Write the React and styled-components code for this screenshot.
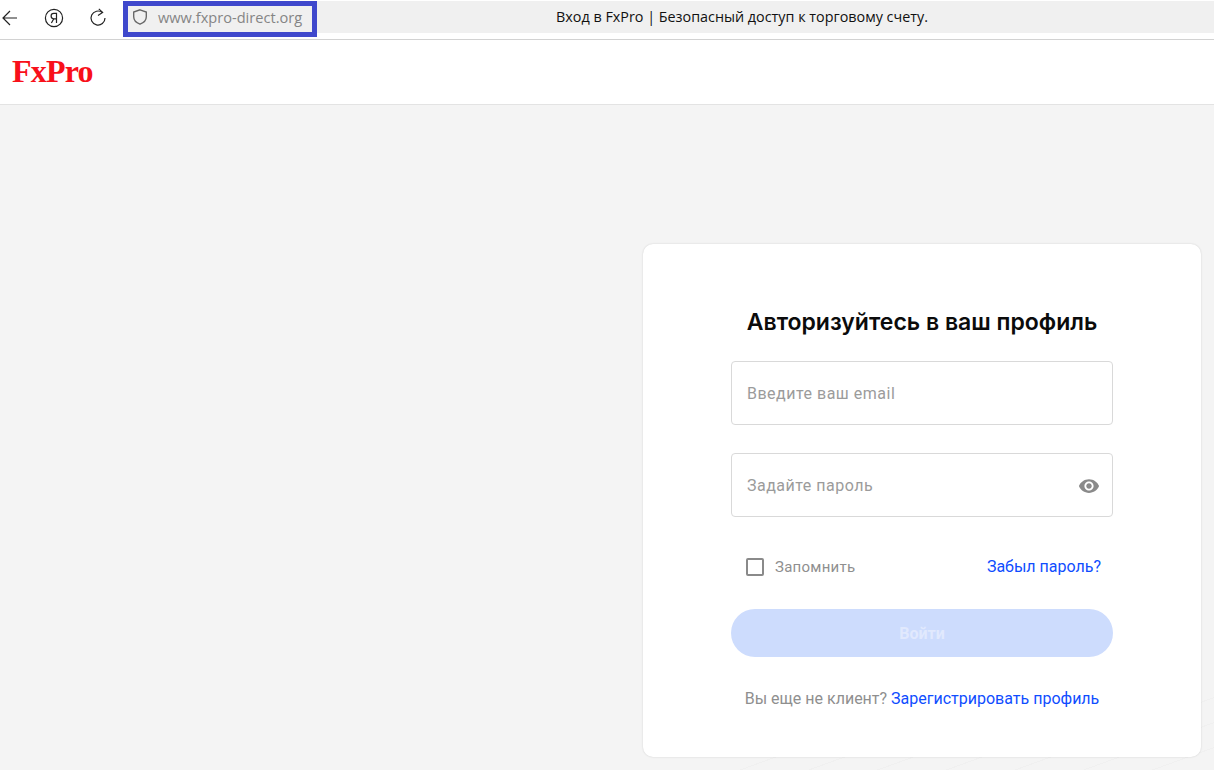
import React from "react"
import styled, { createGlobalStyle } from "styled-components"
import { MdVisibility } from "react-icons/md"

const GlobalStyle = createGlobalStyle`
  html, body {
    margin: 0;
    height: 770px;
    overflow: hidden;
    background: #f4f4f4;
    font-family: Roboto, "Liberation Sans", sans-serif;
  }
  * {
    box-sizing: border-box;
  }
`

const BrowserBar = styled.div`
  display: flex;
  height: 40px;
  background: #fff;
  border-bottom: 1px solid #d2d2d2;
`

const NavButtons = styled.div`
  display: flex;
  align-items: center;
  width: 123px;
  height: 35px;
  gap: 24px;
`

const NavIcon = styled.svg`
  width: ${props => props.$size || 20}px;
  height: ${props => props.$size || 20}px;
  flex: none;
  fill: none;
  stroke: ${props => props.$color || "#222"};
  stroke-width: 1.2;
`

const AddressBox = styled.div`
  display: flex;
  align-items: center;
  gap: 9px;
  width: 194px;
  height: 36px;
  margin-top: 1px;
  padding: 0 0 4px 3px;
  background: #f0f0f0;
  border: 5px solid #3f48cc;
  color: #858585;
  font-family: "Open Sans", sans-serif;
  font-size: 14.6px;
  white-space: nowrap;
`

const TitleStrip = styled.div`
  flex: 1;
  height: 32px;
  margin-top: 1px;
  padding-right: 47px;
  background: #f0f0f0;
  color: #111;
  font-family: "Open Sans", sans-serif;
  font-size: 14.35px;
  line-height: 32px;
  text-align: center;
`

const SiteHeader = styled.header`
  display: flex;
  align-items: center;
  height: 65px;
  padding: 0 0 2px 12px;
  background: #fff;
  border-bottom: 1px solid #e3e3e3;
`

const Logo = styled.div`
  color: #f8101a;
  font-family: "Liberation Serif", serif;
  font-size: 32px;
  font-weight: 700;
  letter-spacing: -0.8px;
`

const Main = styled.main`
  display: flex;
  justify-content: flex-end;
  height: 665px;
  padding: 139px 13px 0 0;
  background-image: repeating-linear-gradient(
    160deg,
    transparent 0 22.5px,
    #f0f0f0 22.5px 23.5px
  );
  background-position: right bottom;
  background-repeat: no-repeat;
  background-size: 500px 90px;
`

const Card = styled.section`
  width: 558px;
  height: 513px;
  padding: 63px 88px 0;
  background: #fff;
  border-radius: 10px;
  box-shadow: 0 0 2px rgba(0, 0, 0, 0.16);
`

const Title = styled.h1`
  margin: 0 0 24px;
  color: #0b0b0b;
  font-family: Inter, sans-serif;
  font-size: 23px;
  font-weight: 600;
  line-height: 30px;
  text-align: center;
`

const Field = styled.div`
  display: flex;
  align-items: center;
  justify-content: space-between;
  height: 64px;
  margin-bottom: 28px;
  padding: 0 12px 0 15px;
  border: 1px solid #d9d9d9;
  border-radius: 4px;
  color: #9b9b9b;
  font-size: 16px;
  letter-spacing: 0.5px;
`

const EyeIcon = styled(MdVisibility)`
  width: 22px;
  height: 22px;
  margin-top: 2px;
  color: #8a8a8a;
`

const OptionsRow = styled.div`
  display: flex;
  align-items: center;
  justify-content: space-between;
  margin: 40px 0 33px;
  padding: 0 12px 0 15px;
`

const Remember = styled.label`
  display: flex;
  align-items: center;
  gap: 11px;
  color: #8f8f8f;
  font-size: 15px;
  letter-spacing: 0.25px;
`

const CheckBox = styled.span`
  width: 18px;
  height: 18px;
  border: 2px solid #8a8a8a;
  border-radius: 2px;
`

const BlueLink = styled.a`
  color: #0f4dff;
  font-size: 16px;
  text-decoration: none;
`

const SubmitButton = styled.button`
  display: block;
  width: 100%;
  height: 48px;
  border: 0;
  border-radius: 24px;
  background: #cddcfd;
  color: #e1e9fd;
  font-family: inherit;
  font-size: 16px;
  font-weight: 700;
`

const Footnote = styled.p`
  margin: 32px 0 0;
  color: #8f8f8f;
  font-size: 16px;
  text-align: center;
`

export default function App() {
  return (
    <>
      <GlobalStyle />
      <BrowserBar>
        <NavButtons>
          <NavIcon viewBox="0 0 20 20">
            <path d="M17 10H3M10 3l-7 7 7 7" />
          </NavIcon>
          <NavIcon viewBox="0 0 20 20">
            <circle cx="10" cy="10" r="8.6" />
            <path d="M12.5 15V5.4H9.8a2.7 2.7 0 0 0 0 5.4h2.7M9.8 10.8 7.4 15" />
          </NavIcon>
          <NavIcon viewBox="0 0 20 20">
            <path d="M14.4 4.6A7 7 0 1 0 17 10" />
            <path d="M10.8 0.9 14.6 4.4 10 7.4" />
          </NavIcon>
        </NavButtons>
        <AddressBox>
          <NavIcon viewBox="0 0 16 16" $size={18} $color="#666">
            <path d="M8 1.6 13.6 3.6v4.2c0 3.2-2.4 5.4-5.6 6.6-3.2-1.2-5.6-3.4-5.6-6.6V3.6z" />
          </NavIcon>
          www.fxpro-direct.org
        </AddressBox>
        <TitleStrip>Вход в FxPro | Безопасный доступ к торговому счету.</TitleStrip>
      </BrowserBar>
      <SiteHeader>
        <Logo>FxPro</Logo>
      </SiteHeader>
      <Main>
        <Card>
          <Title>Авторизуйтесь в ваш профиль</Title>
          <Field>Введите ваш email</Field>
          <Field>
            Задайте пароль
            <EyeIcon />
          </Field>
          <OptionsRow>
            <Remember>
              <CheckBox />
              Запомнить
            </Remember>
            <BlueLink href="#">Забыл пароль?</BlueLink>
          </OptionsRow>
          <SubmitButton type="button">Войти</SubmitButton>
          <Footnote>
            Вы еще не клиент? <BlueLink href="#">Зарегистрировать профиль</BlueLink>
          </Footnote>
        </Card>
      </Main>
    </>
  )
}
